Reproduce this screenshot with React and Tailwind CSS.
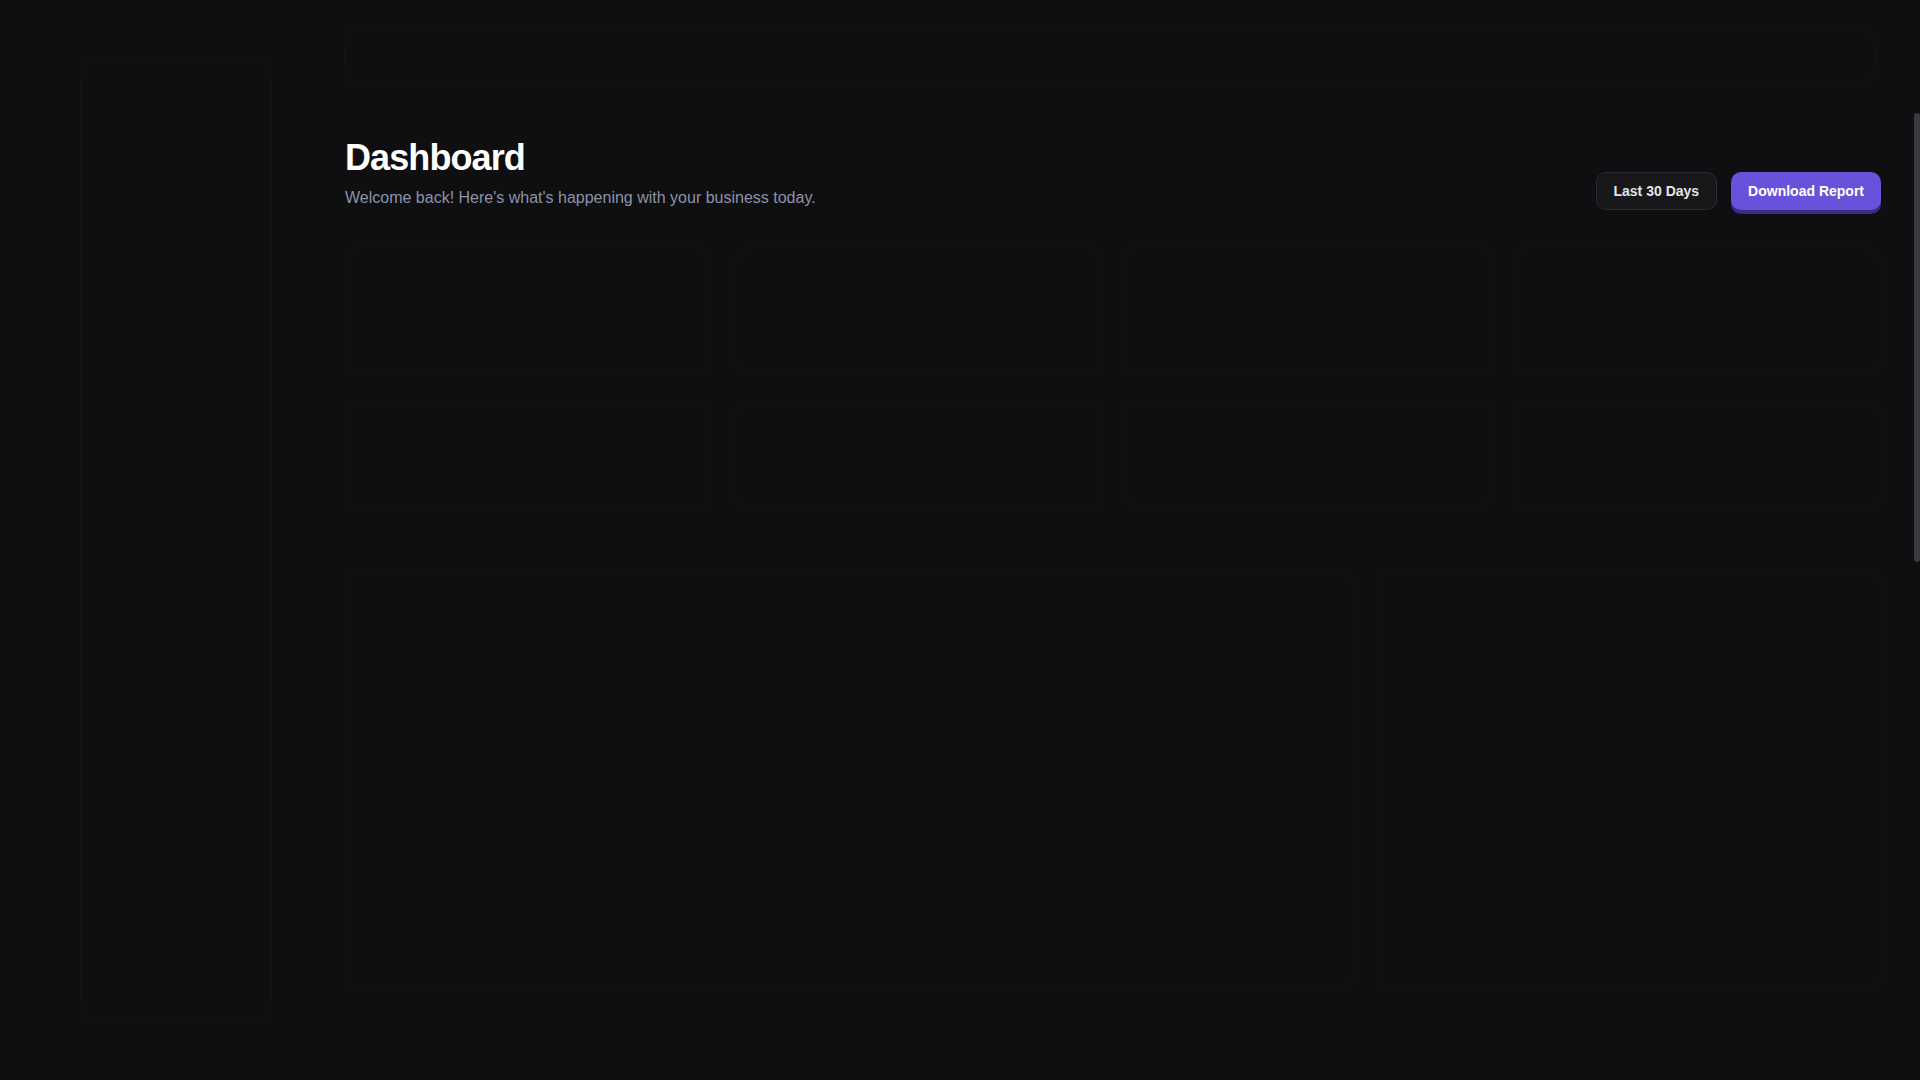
import React from "react";

const stats = [
  { label: "Total Revenue", value: "$48,295", change: "+12.5%" },
  { label: "Active Users", value: "2,845", change: "+8.2%" },
  { label: "New Orders", value: "1,204", change: "+4.1%" },
  { label: "Conversion", value: "3.24%", change: "-0.4%" },
];

const FaintCard = ({ className = "" }) => (
  <div className={`rounded-2xl border border-white/[0.025] bg-white/[0.006] ${className}`} />
);

export default function App() {
  return (
    <div
      className="h-screen w-full flex bg-[#0f0f11] overflow-hidden"
      style={{ fontFamily: '"Liberation Sans", Arial, sans-serif' }}
    >
      {/* Sidebar (still fading in) */}
      <aside className="w-[280px] shrink-0 py-[56px] pl-[80px] pr-[8px]">
        <div className="h-full rounded-3xl border border-white/[0.02]" />
      </aside>

      <div className="flex-1 flex flex-col min-w-0">
        {/* Top bar (still fading in) */}
        <div className="h-[112px] shrink-0 flex items-center pl-[64px] pr-[38px]">
          <div className="h-[56px] w-full rounded-2xl border border-white/[0.02]" />
        </div>

        <main className="flex-1 overflow-hidden pl-[65px] pr-[33px]">
          <div className="pt-[26px] pb-[40px]">
            {/* Header */}
            <div className="flex items-end justify-between">
              <div>
                <h1 className="text-4xl font-bold tracking-tight text-white">Dashboard</h1>
                <p className="mt-[8px] text-base text-[#8b93a8]">
                  Welcome back! Here's what's happening with your business today.
                </p>
              </div>
              <div className="flex items-center gap-[14px]">
                <button className="h-[38px] px-[17px] rounded-[10px] bg-[#18181b] border border-[#2a2a2f] text-sm font-bold text-[#e4e4e7]">
                  Last 30 Days
                </button>
                <button className="h-[38px] px-[17px] rounded-[10px] bg-[#6852dc] text-sm font-bold text-white shadow-[0_4px_0_#3a2d86]">
                  Download Report
                </button>
              </div>
            </div>

            {/* Stat cards (still fading in) */}
            <div className="mt-[36px] grid grid-cols-4 gap-[24px] opacity-60">
              {stats.map((s) => (
                <div key={s.label} className="flex flex-col gap-[24px]">
                  <FaintCard className="h-[130px]" />
                  <FaintCard className="h-[110px]" />
                </div>
              ))}
            </div>

            {/* Charts (still fading in) */}
            <div className="mt-[60px] grid grid-cols-[2fr_1fr] gap-[24px] opacity-60">
              <FaintCard className="h-[420px]" />
              <FaintCard className="h-[420px]" />
            </div>
          </div>
        </main>
      </div>

      {/* Scrollbar */}
      <div className="w-[6px] shrink-0 pt-[113px]">
        <div className="h-[449px] w-full rounded-full bg-[#3a3a3f]" />
      </div>
    </div>
  );
}
